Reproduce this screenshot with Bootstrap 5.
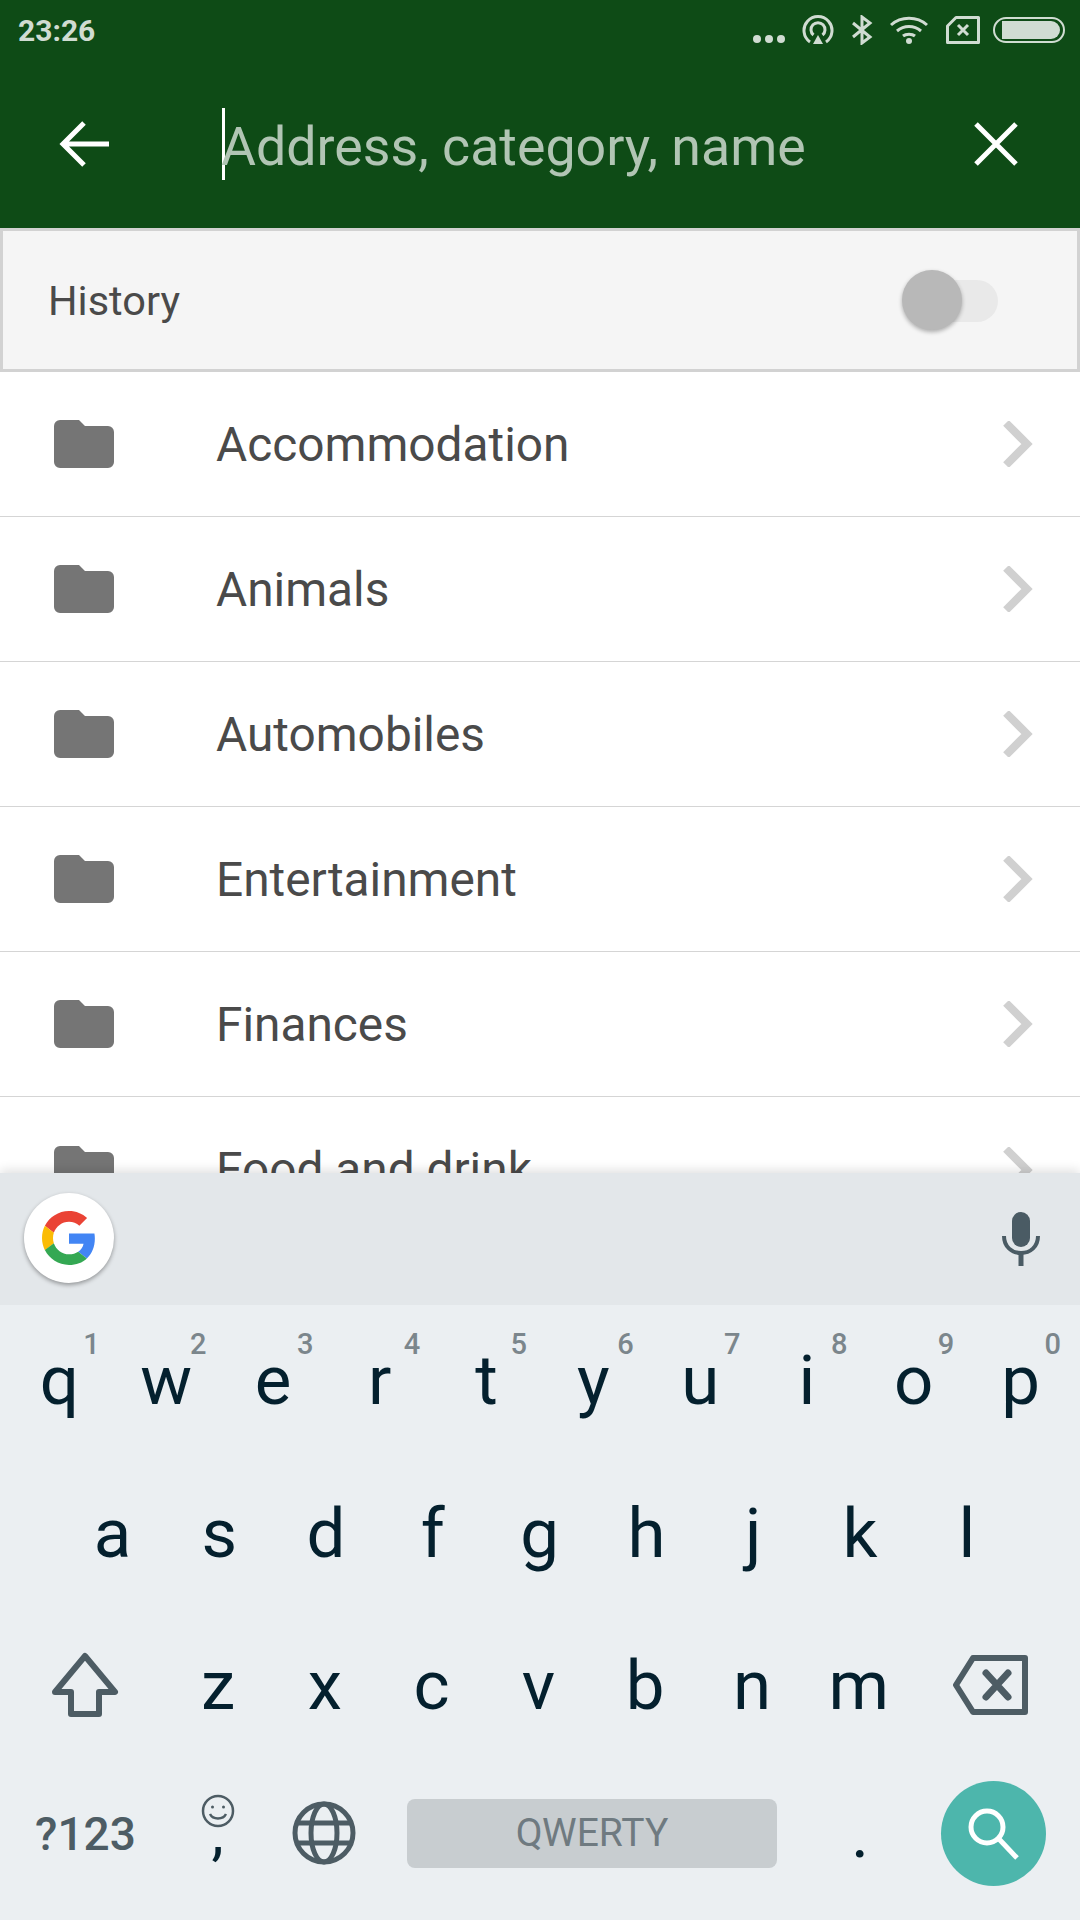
<!DOCTYPE html>
<html lang="en">

<head>
    <meta charset="UTF-8">
    <meta name="viewport" content="width=device-width, initial-scale=1.0">
    <title>Search</title>
    <link href="https://cdn.jsdelivr.net/npm/bootstrap@5.3.3/dist/css/bootstrap.min.css" rel="stylesheet">
    <style>
body {
    font-family: Roboto, sans-serif;
    width: 1080px;
    height: 1920px;
    overflow: hidden;
    background-color: #fff;
}

/* Status bar + search bar */
.top-green {
    background-color: #0e4b16;
    height: 228px;
}

.status-row {
    height: 60px;
    padding: 0 15px 0 18px;
}

.status-time {
    font-size: 30px;
    font-weight: 700;
    color: #d0dcd2;
}

.status-icons svg {
    display: block;
}

.dots-icon {
    margin-top: 18px;
    margin-right: 17px;
}

.hotspot-icon {
    margin-right: 17px;
}

.bt-icon {
    margin-right: 17px;
}

.wifi-icon {
    margin-right: 18px;
}

.sim-icon {
    margin-right: 13px;
}

.search-row {
    height: 168px;
}

.back-cell {
    width: 222px;
    padding-left: 59px;
}

.search-cursor {
    width: 3px;
    height: 72px;
    background-color: #fff;
    flex-shrink: 0;
}

.search-hint {
    font-size: 53.700px;
    line-height: 72px;
    padding-top: 6px;
    margin-left: -4px;
    color: #b1c5b4;
    white-space: nowrap;
}

.clear-icon {
    margin-right: 62px;
}

/* History switch row */
.history-row {
    height: 144px;
    background-color: #f5f5f5;
    border: 3px solid #d2d2d2;
    padding: 0 79px 0 45px;
    font-size: 41.500px;
    color: #4a4a4a;
}

.history-label {
    padding-top: 2px;
}

.fake-switch {
    width: 96px;
    height: 62px;
    margin-top: 2px;
}

.fake-switch-track {
    position: absolute;
    left: 18px;
    right: 0;
    top: 10px;
    height: 42px;
    border-radius: 21px;
    background-color: #e9e9e9;
}

.fake-switch-thumb {
    position: absolute;
    left: 0;
    top: 0;
    width: 60px;
    height: 60px;
    border-radius: 50%;
    background-color: #b8b8b8;
    box-shadow: 0 2px 4px rgba(0, 0, 0, 0.3);
}

/* Categories */
.cat-wrap {
    flex: 1 1 0;
    min-height: 0;
    overflow: hidden;
}

.cat-item {
    height: 145px;
    padding: 0 47px 0 54px;
    border-color: #d5d5d5;
    flex-shrink: 0;
}

.cat-name {
    margin-left: 102px;
    padding-top: 3px;
    font-size: 47.800px;
    color: #4a4a4a;
    flex-grow: 1;
}

/* Keyboard */
.kb {
    height: 747px;
    flex-shrink: 0;
    background-color: #ebeff2;
    color: #04202e;
    position: relative;
    box-shadow: 0 -3px 10px rgba(0, 0, 0, 0.12);
}

.kb-strip {
    height: 132px;
    background-color: #e3e7ea;
    padding: 0 40px 0 24px;
}

.g-circle {
    width: 90px;
    height: 90px;
    border-radius: 50%;
    background-color: #fff;
    box-shadow: 0 2px 4px rgba(0, 0, 0, 0.35);
    margin-top: -2px;
}

.kb-row {
    height: 152px;
    padding: 0 6px;
}

.kb-row-top {
    padding-bottom: 2px;
}

.kb-row-mid {
    padding-left: 59px;
}

.kb-row-last {
    height: 144px;
    padding: 0;
}

.kb-key {
    flex: 0 0 106.800px;
    position: relative;
    font-size: 69px;
    line-height: 1;
    text-align: center;
}

.kb-wide {
    flex: 0 0 158.600px;
}

.kb-hint {
    position: absolute;
    top: -16px;
    right: 13px;
    font-size: 29px;
    font-weight: 500;
    color: #7b868c;
}

.kb-sym {
    flex: 0 0 162px;
    padding-left: 9px;
    padding-top: 2px;
    font-size: 46px;
    font-weight: 500;
    color: #4d5c64;
    text-align: center;
}

.kb-emoji-key {
    flex: 0 0 108px;
    height: 100px;
    padding: 9px 0 0 3px;
    margin-top: 4px;
    overflow: hidden;
}

.kb-comma {
    display: block;
    margin-top: -26px;
    font-size: 62px;
}

.kb-globe-key {
    flex: 0 0 108px;
}

.kb-period-key {
    flex: 0 0 108px;
}

.kb-space-cell {
    flex: 0 0 428px;
    padding: 0 29px;
}

.kb-space {
    height: 69px;
    background-color: #c8cdd0;
    border-radius: 8px;
    font-size: 39px;
    color: #6f7a80;
}

.kb-go {
    width: 105px;
    height: 105px;
    border-radius: 50%;
    background-color: #4db6ac;
    margin-left: 27px;
}
    </style>
</head>

<body class="d-flex flex-column">
    <header class="top-green">
        <div class="status-row d-flex align-items-center justify-content-between">
            <span class="status-time">23:26</span>
            <div class="status-icons d-flex align-items-center">
                <svg class="dots-icon" width="32" height="10" viewBox="0 0 32 10" fill="#d0dcd2">
                    <circle cx="4" cy="5" r="4"/><circle cx="16" cy="5" r="4"/><circle cx="28" cy="5" r="4"/>
                </svg>
                <svg class="hotspot-icon" width="32" height="30" viewBox="0 0 32 30" fill="none" stroke="#d0dcd2" stroke-width="3">
                    <path d="M8 27A14 14 0 1 1 24 27"/>
                    <path d="M11.500 20A7 7 0 1 1 20.500 20"/>
                    <path d="M16 20l5 9H11z" fill="#d0dcd2" stroke="none"/>
                </svg>
                <svg class="bt-icon" width="22" height="30" viewBox="0 0 22 30" fill="none" stroke="#d0dcd2" stroke-width="3">
                    <path d="M2 8l17 14-8 6V2l8 6L2 22"/>
                </svg>
                <svg class="wifi-icon" width="38" height="28" viewBox="0 0 38 28" fill="none" stroke="#d0dcd2" stroke-width="3">
                    <path d="M1 9C11 0 27 0 37 9"/>
                    <path d="M7 15C14 9 24 9 31 15"/>
                    <path d="M13 20C16 17.500 22 17.500 25 20"/>
                    <circle cx="19" cy="25" r="3" fill="#d0dcd2" stroke="none"/>
                </svg>
                <svg class="sim-icon" width="34" height="28" viewBox="0 0 34 28" fill="none" stroke="#d0dcd2" stroke-width="3">
                    <path d="M10 1.500H32.500V26.500H1.500V10z" stroke-linejoin="round"/>
                    <path d="M12 9l10 10M22 9L12 19"/>
                </svg>
                <svg width="72" height="26" viewBox="0 0 72 26">
                    <rect x="1" y="1" width="70" height="24" rx="12" fill="none" stroke="#d0dcd2" stroke-width="2"/>
                    <path d="M9 4H58a9 9 0 0 1 0 18H9z" fill="#d0dcd2"/>
                </svg>
            </div>
        </div>
        <div class="search-row d-flex align-items-center">
            <div class="back-cell">
                <svg width="52" height="46" viewBox="0 0 52 46" fill="none" stroke="#fff" stroke-width="5" class="d-block">
                    <path d="M50 23H4M25 2L4 23l21 21"/>
                </svg>
            </div>
            <div class="search-cursor"></div>
            <div class="search-hint flex-grow-1">Address, category, name</div>
            <svg class="clear-icon" width="44" height="44" viewBox="0 0 44 44" fill="none" stroke="#fff" stroke-width="5">
                <path d="M2 2l40 40M42 2L2 42"/>
            </svg>
        </div>
    </header>

    <div class="history-row d-flex align-items-center justify-content-between flex-shrink-0">
        <span class="history-label">History</span>
        <div class="fake-switch position-relative">
            <div class="fake-switch-track"></div>
            <div class="fake-switch-thumb"></div>
        </div>
    </div>

    <div class="cat-wrap">
        <ul class="list-group list-group-flush" id="cats"></ul>
    </div>

    <div class="kb">
        <div class="kb-strip d-flex align-items-center justify-content-between">
            <div class="g-circle d-flex align-items-center justify-content-center">
                <svg width="54" height="54" viewBox="0 0 48 48">
                    <path fill="#EA4335" d="M24 9.500c3.540 0 6.710 1.220 9.210 3.600l6.850-6.850C35.900 2.380 30.470 0 24 0 14.620 0 6.510 5.380 2.560 13.220l7.980 6.190C12.430 13.720 17.740 9.500 24 9.500z"/>
                    <path fill="#4285F4" d="M46.980 24.550c0-1.570-.15-3.090-.38-4.550H24v9.020h12.940c-.58 2.960-2.260 5.480-4.780 7.180l7.730 6c4.510-4.180 7.090-10.360 7.090-17.650z"/>
                    <path fill="#FBBC05" d="M10.530 28.590c-.48-1.450-.76-2.990-.76-4.590s.27-3.140.76-4.590l-7.980-6.190C.92 16.460 0 20.120 0 24c0 3.880.92 7.540 2.560 10.780l7.970-6.190z"/>
                    <path fill="#34A853" d="M24 48c6.480 0 11.930-2.130 15.890-5.810l-7.730-6c-2.150 1.450-4.920 2.300-8.160 2.300-6.260 0-11.570-4.220-13.470-9.910l-7.980 6.190C6.510 42.620 14.620 48 24 48z"/>
                </svg>
            </div>
            <svg width="38" height="54" viewBox="0 0 38 54" class="d-block">
                <rect x="10" y="0" width="18" height="35" rx="9" fill="#4a5b64"/>
                <path d="M2 24c0 11 8 17 17 17s17-6 17-17" fill="none" stroke="#4a5b64" stroke-width="4"/>
                <path d="M19 40v14" stroke="#4a5b64" stroke-width="5"/>
            </svg>
        </div>

        <div class="kb-row kb-row-top d-flex align-items-center" id="row1"></div>
        <div class="kb-row kb-row-mid d-flex align-items-center" id="row2"></div>
        <div class="kb-row d-flex align-items-center">
            <div class="kb-key kb-wide d-flex justify-content-center">
                <svg width="68" height="66" viewBox="0 0 68 66" fill="none" stroke="#4d5c64" stroke-width="6" stroke-linejoin="round">
                    <path d="M34 4L64 40H48V62H20V40H4z"/>
                </svg>
            </div>
            <div id="row3" class="d-flex"></div>
            <div class="kb-key kb-wide d-flex justify-content-center">
                <svg width="76" height="60" viewBox="0 0 76 60" fill="none" stroke="#4d5c64" stroke-width="6" stroke-linejoin="round">
                    <path d="M20 3H72V57H20L3 30z"/>
                    <path d="M33 18l22 24M55 18L33 42" stroke-width="7" stroke-linecap="round"/>
                </svg>
            </div>
        </div>
        <div class="kb-row kb-row-last d-flex align-items-center">
            <div class="kb-sym">?123</div>
            <div class="kb-key kb-emoji-key d-flex flex-column align-items-center">
                <svg width="34" height="34" viewBox="0 0 34 34" fill="none" stroke="#4d5c64" stroke-width="2.500" class="flex-shrink-0">
                    <circle cx="17" cy="17" r="15"/>
                    <circle cx="11.500" cy="13" r="1.500" fill="#4d5c64" stroke="none"/>
                    <circle cx="22.500" cy="13" r="1.500" fill="#4d5c64" stroke="none"/>
                    <path d="M9 20c3 6 13 6 16 0"/>
                </svg>
                <span class="kb-comma">,</span>
            </div>
            <div class="kb-key kb-globe-key d-flex justify-content-center">
                <svg width="64" height="64" viewBox="0 0 64 64" fill="none" stroke="#4d5c64" stroke-width="5" class="d-block">
                    <circle cx="32" cy="32" r="29"/>
                    <ellipse cx="32" cy="32" rx="13" ry="29"/>
                    <path d="M5 22H59M5 42H59"/>
                </svg>
            </div>
            <div class="kb-space-cell">
                <div class="kb-space d-flex align-items-center justify-content-center">QWERTY</div>
            </div>
            <div class="kb-key kb-period-key">.</div>
            <div class="kb-go d-flex align-items-center justify-content-center">
                <svg width="54" height="54" viewBox="0 0 54 54" fill="none" stroke="#fff" stroke-width="5" class="d-block">
                    <circle cx="20" cy="21" r="16"/>
                    <path d="M32 33l18 19"/>
                </svg>
            </div>
        </div>
    </div>

    <script>
        const categories = ["Accommodation", "Animals", "Automobiles", "Entertainment", "Finances", "Food and drink"];
        const folderIcon = '<svg width="60" height="48" viewBox="0 0 60 48" class="d-block flex-shrink-0"><path fill="#757575" d="M6 0H25l6 6H54a6 6 0 0 1 6 6V42a6 6 0 0 1-6 6H6a6 6 0 0 1-6-6V6a6 6 0 0 1 6-6z"/></svg>';
        const chevron = '<svg width="31" height="46" viewBox="0 0 31 46" fill="none" stroke="#d0d0d0" stroke-width="8" class="d-block flex-shrink-0"><path d="M4 2l21 21L4 44"/></svg>';

        const list = document.getElementById("cats");
        categories.forEach(name => {
            const li = document.createElement("li");
            li.className = "list-group-item cat-item d-flex align-items-center";
            li.innerHTML = `${folderIcon}<span class="cat-name">${name}</span>${chevron}`;
            list.appendChild(li);
        });

        function addKeys(id, letters, digits) {
            const row = document.getElementById(id);
            letters.split("").forEach((ch, i) => {
                const key = document.createElement("div");
                key.className = "kb-key";
                key.textContent = ch;
                if (digits) {
                    const hint = document.createElement("span");
                    hint.className = "kb-hint";
                    hint.textContent = digits[i];
                    key.appendChild(hint);
                }
                row.appendChild(key);
            });
        }

        addKeys("row1", "qwertyuiop", "1234567890");
        addKeys("row2", "asdfghjkl");
        addKeys("row3", "zxcvbnm");
    </script>
    <script src="https://cdn.jsdelivr.net/npm/bootstrap@5.3.3/dist/js/bootstrap.bundle.min.js"></script>
</body>

</html>
